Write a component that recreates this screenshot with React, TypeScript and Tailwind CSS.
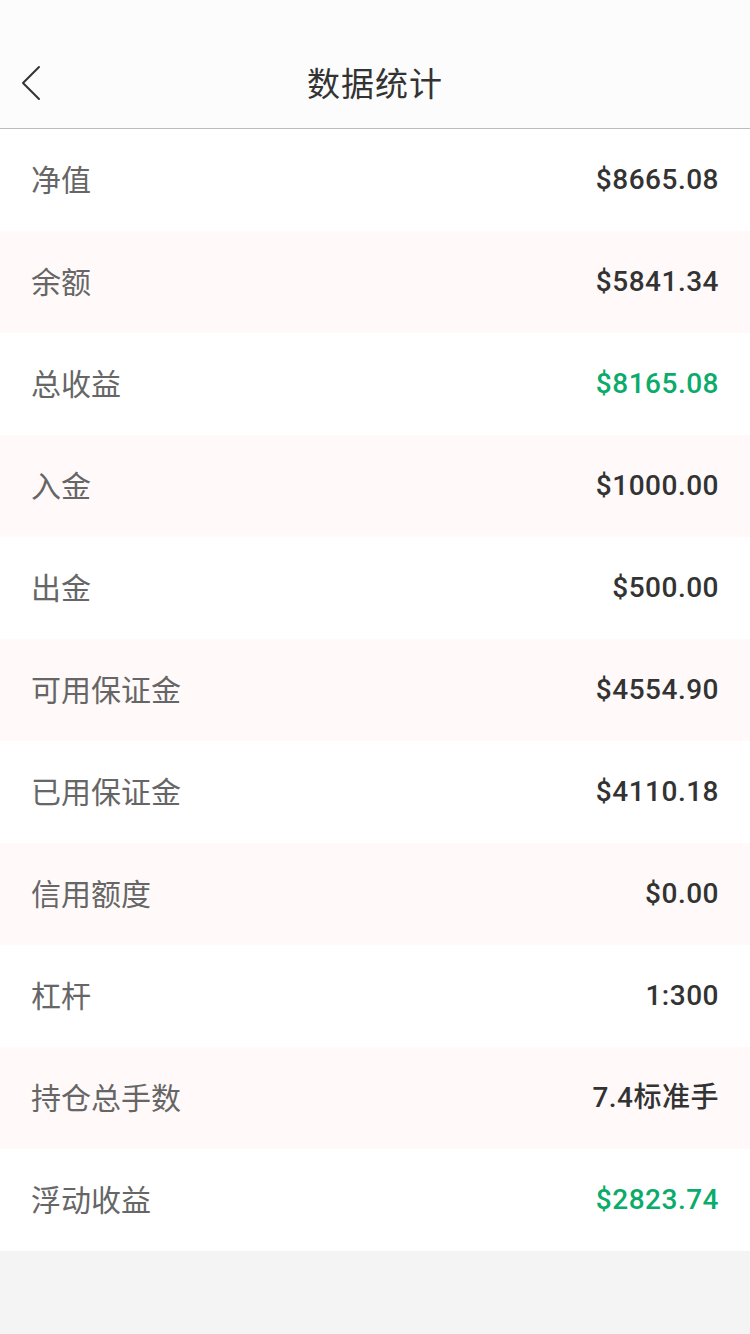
const rows: { label: string; value: string; green?: boolean }[] = [
  { label: '净值', value: '$8665.08' },
  { label: '余额', value: '$5841.34' },
  { label: '总收益', value: '$8165.08', green: true },
  { label: '入金', value: '$1000.00' },
  { label: '出金', value: '$500.00' },
  { label: '可用保证金', value: '$4554.90' },
  { label: '已用保证金', value: '$4110.18' },
  { label: '信用额度', value: '$0.00' },
  { label: '杠杆', value: '1:300' },
  { label: '持仓总手数', value: '7.4标准手' },
  { label: '浮动收益', value: '$2823.74', green: true },
]

export default function App() {
  return (
    <div className="min-h-[1334px] bg-[#f4f4f4] font-['Roboto','Noto_Sans_CJK_SC',sans-serif]">
      {/* Header */}
      <header className="relative h-[129px] bg-[#fcfcfc] border-b border-[#bcbcbc] flex items-end justify-center pb-[27px]">
        <button className="absolute left-[20px] top-[64px] w-[24px] h-[38px] flex items-center">
          <svg width="22" height="36" viewBox="0 0 22 36" fill="none">
            <path d="M19 2 L3 18 L19 34" stroke="#333" strokeWidth="2" strokeLinecap="round" strokeLinejoin="round" />
          </svg>
        </button>
        <h1 className="text-[33px] leading-none text-[#333] tracking-[1px]">数据统计</h1>
      </header>

      {/* Rows */}
      <ul>
        {rows.map((r, i) => (
          <li
            key={r.label}
            className={`h-[102px] flex items-center justify-between pl-[31px] pr-[31px] ${
              i % 2 === 1 ? 'bg-[#fffaf9]' : 'bg-white'
            }`}
          >
            <span className="text-[30px] text-[#666]">{r.label}</span>
            <span
              className={`text-[28px] font-medium tracking-[0.5px] ${r.green ? 'text-[#0bab6c]' : 'text-[#333]'}`}
            >
              {r.value}
            </span>
          </li>
        ))}
      </ul>
    </div>
  )
}
